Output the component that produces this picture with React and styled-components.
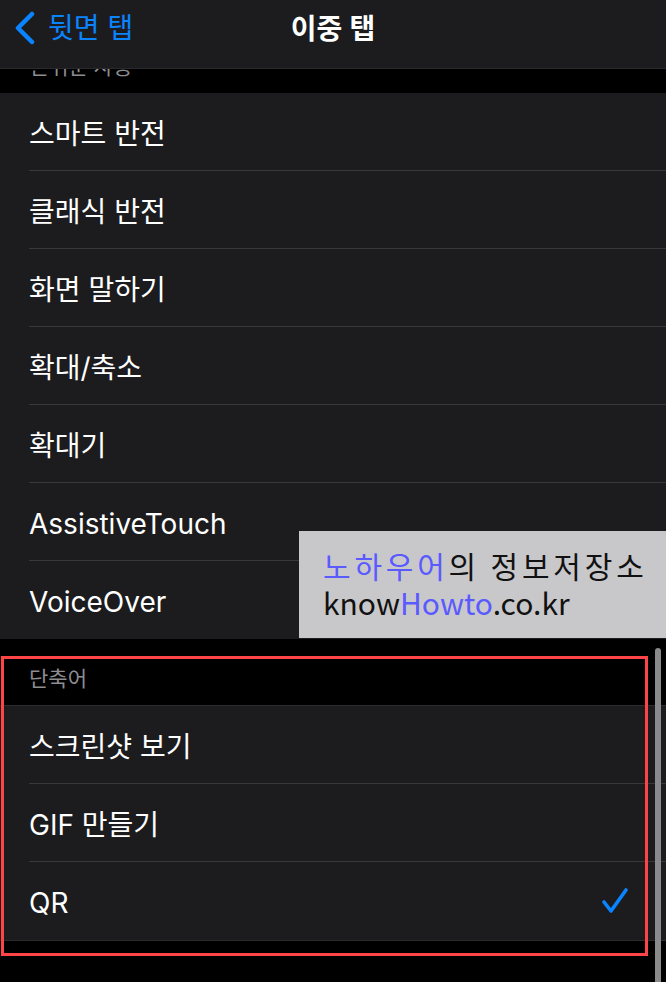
import React from 'react'
import styled, { createGlobalStyle } from 'styled-components'

const GlobalStyle = createGlobalStyle`
  html, body {
    margin: 0;
    padding: 0;
    background: #000;
  }
  body {
    font-family: Inter, "Noto Sans CJK KR", sans-serif;
  }
`

const blue = '#0a84ff'

const firstGroup = [
  '스마트 반전',
  '클래식 반전',
  '화면 말하기',
  '확대/축소',
  '확대기',
  'AssistiveTouch',
  'VoiceOver',
]

const shortcutGroup = [
  { label: '스크린샷 보기' },
  { label: 'GIF 만들기' },
  { label: 'QR', checked: true },
]

export default function App() {
  return (
    <Screen>
      <GlobalStyle />
      <NavBar>
        <BackButton>
          <svg width="22" height="34" viewBox="0 0 22 34">
            <path d="M18 3 L4 17 L18 31" fill="none" stroke={blue} strokeWidth="4.5" strokeLinecap="round" strokeLinejoin="round" />
          </svg>
          <span>뒷면 탭</span>
        </BackButton>
        <Title>이중 탭</Title>
      </NavBar>

      <ScrolledHeader>
        <ScrolledLabel>손쉬운 사용</ScrolledLabel>
      </ScrolledHeader>
      <Group>
        {firstGroup.map((label, i) => (
          <Row key={label} last={i === firstGroup.length - 1}>
            <RowLabel>{label}</RowLabel>
          </Row>
        ))}
      </Group>

      <SectionHeader>단축어</SectionHeader>
      <Group>
        {shortcutGroup.map((item, i) => (
          <Row key={item.label} last={i === shortcutGroup.length - 1}>
            <RowLabel>{item.label}</RowLabel>
            {item.checked && (
              <svg width="28" height="28" viewBox="0 0 28 28">
                <path d="M3 15 L10 24 L25 3" fill="none" stroke={blue} strokeWidth="3.6" strokeLinecap="round" strokeLinejoin="round" />
              </svg>
            )}
          </Row>
        ))}
      </Group>
      <Footer />

      <Watermark>
        <WatermarkLine wide><Accent>노하우어</Accent>의 정보저장소</WatermarkLine>
        <WatermarkLine>know<Accent>Howto</Accent>.co.kr</WatermarkLine>
      </Watermark>
      <Highlight />
      <ScrollBar />
    </Screen>
  )
}

const Screen = styled.div`
  position: relative;
  width: 666px;
  height: 982px;
  overflow: hidden;
  background: #000;
  color: #fff;
`
const NavBar = styled.div`
  position: relative;
  z-index: 2;
  height: 68px;
  display: flex;
  align-items: center;
  justify-content: center;
  background: #1c1c1e;
  border-bottom: 1px solid #2a2a2c;
`
const BackButton = styled.div`
  position: absolute;
  left: 14px;
  top: 10px;
  display: flex;
  align-items: center;
  gap: 12px;
  color: ${blue};
  font-size: 28px;
  line-height: 36px;
`
const Title = styled.div`
  font-size: 28px;
  font-weight: 600;
  line-height: 36px;
  margin-top: -10px;
`
const ScrolledHeader = styled.div`
  height: 24px;
  overflow: hidden;
  padding-left: 30px;
`
const ScrolledLabel = styled.div`
  margin-top: -16px;
  font-size: 21px;
  line-height: 28px;
  color: #8d8d92;
`
const Group = styled.div`
  background: #1c1c1e;
`
const Row = styled.div`
  height: 78px;
  margin-left: 29px;
  padding-right: 37px;
  display: flex;
  align-items: center;
  justify-content: space-between;
  box-sizing: border-box;
  border-bottom: 1px solid ${props => props.last ? 'transparent' : '#38383a'};
`
const RowLabel = styled.div`
  font-size: 28px;
  line-height: 34px;
  padding-top: 4px;
`
const SectionHeader = styled.div`
  height: 67px;
  box-sizing: border-box;
  padding: 26px 0 0 29px;
  font-size: 21px;
  line-height: 28px;
  color: #8d8d92;
  border-bottom: 1px solid #2c2c2e;
`
const Footer = styled.div`
  border-top: 1px solid #2c2c2e;
`
const Watermark = styled.div`
  position: absolute;
  left: 299px;
  top: 531px;
  width: 367px;
  height: 107px;
  box-sizing: border-box;
  padding: 16px 0 0 24px;
  background: #c8c8ca;
  color: #111;
  font-family: "Noto Sans CJK KR", sans-serif;
  font-size: 30px;
  line-height: 37px;
`
const WatermarkLine = styled.div`
  white-space: nowrap;
  letter-spacing: ${props => props.wide ? '3.8px' : '0'};
`
const Accent = styled.span`
  color: #5a5aff;
`
const Highlight = styled.div`
  position: absolute;
  left: 1px;
  top: 656px;
  width: 647px;
  height: 300px;
  box-sizing: border-box;
  border: 3px solid #ff4448;
`
const ScrollBar = styled.div`
  position: absolute;
  left: 655px;
  top: 648px;
  width: 6px;
  bottom: 0;
  background: #8a8a8c;
  border-radius: 3px 3px 0 0;
`
